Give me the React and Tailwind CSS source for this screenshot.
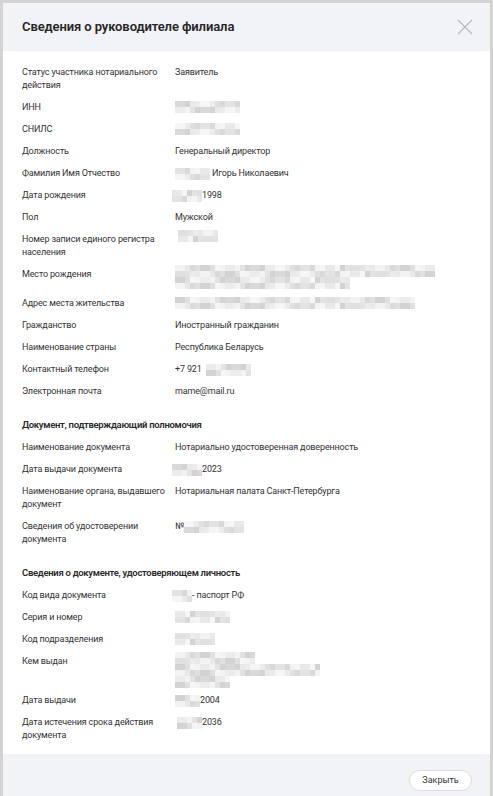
import React from "react";

const shades = [
  "bg-[#ececec]",
  "bg-[#e3e3e3]",
  "bg-[#f3f3f3]",
  "bg-[#d9d9d9]",
  "bg-[#e9e9e9]",
  "bg-[#d3d3d3]",
  "bg-[#f6f6f6]",
  "bg-[#e0e0e0]",
];

function Blur({ widths = [60], seed = 1, cell = 5 }) {
  return (
    <div className="flex flex-col">
      {widths.map((w, li) => {
        const n = Math.max(1, Math.round(w / cell));
        return (
          <div key={li} className="flex flex-col">
            {[0, 1].map((r) => (
              <div key={r} className="flex h-[6px]">
                {Array.from({ length: n }).map((_, i) => (
                  <div
                    key={i}
                    className={shades[(i * 7 + r * 5 + li * 11 + seed * 3 + ((i * i) % 5)) % shades.length]}
                    style={{ width: cell }}
                  />
                ))}
              </div>
            ))}
          </div>
        );
      })}
    </div>
  );
}

function Row({ label, children, valueClass = "" }) {
  return (
    <div className="flex items-start">
      <div className="w-[153px] shrink-0 pr-[6px]">{label}</div>
      <div className={"flex-1 " + valueClass}>{children}</div>
    </div>
  );
}

function Heading({ children }) {
  return (
    <div className="mt-[10px] text-[9.5px] leading-[15px] font-semibold tracking-[-0.3px] text-[#2a2a2a]">
      {children}
    </div>
  );
}

export default function App() {
  return (
    <div
      className="h-[796px] w-[493px] overflow-hidden bg-[#d3d3d3] pt-[3px] px-[3px]"
      style={{ fontFamily: 'Roboto, "Noto Sans", Arial, sans-serif' }}
    >
      <div className="flex h-full flex-col bg-white">
        <div className="flex h-[48px] shrink-0 items-center justify-between bg-[#f2f3f6] pl-[19px] pr-[17px]">
          <div className="text-[13px] font-semibold tracking-[-0.1px] text-[#262626]">
            Сведения о руководителе филиала
          </div>
          <svg width="16" height="16" viewBox="0 0 16 16" className="mb-[1px]">
            <path d="M1 1 L15 15 M15 1 L1 15" stroke="#b7b9be" strokeWidth="1.2" fill="none" />
          </svg>
        </div>

        <div className="flex flex-1 flex-col gap-[9px] px-[19px] pt-[15px] text-[9px] leading-[13px] tracking-[-0.15px] text-[#333]">
          <Row label="Статус участника нотариального действия">Заявитель</Row>
          <Row label="ИНН">
            <Blur widths={[65]} seed={1} />
          </Row>
          <Row label="СНИЛС">
            <Blur widths={[67]} seed={2} />
          </Row>
          <Row label="Должность">Генеральный директор</Row>
          <Row label="Фамилия Имя Отчество">
            <div className="flex items-center gap-[2px]">
              <Blur widths={[35]} seed={3} />
              <span>Игорь Николаевич</span>
            </div>
          </Row>
          <Row label="Дата рождения">
            <div className="-ml-[3px] flex items-center">
              <Blur widths={[30]} seed={4} />
              <span>1998</span>
            </div>
          </Row>
          <Row label="Пол">Мужской</Row>
          <Row label="Номер записи единого регистра населения">
            <div className="ml-[3px] -mt-[3px]">
              <Blur widths={[40]} seed={5} />
            </div>
          </Row>
          <Row label="Место рождения">
            <div className="h-[23px]">
              <div className="-mt-[3px]">
                <Blur widths={[260, 175]} seed={6} />
              </div>
            </div>
          </Row>
          <Row label="Адрес места жительства">
            <Blur widths={[242]} seed={7} />
          </Row>
          <Row label="Гражданство">Иностранный гражданин</Row>
          <Row label="Наименование страны">Республика Беларусь</Row>
          <Row label="Контактный телефон">
            <div className="flex items-center gap-[4px]">
              <span>+7 921</span>
              <Blur widths={[45]} seed={8} />
            </div>
          </Row>
          <Row label="Электронная почта">mame@mail.ru</Row>

          <Heading>Документ, подтверждающий полномочия</Heading>
          <Row label="Наименование документа">Нотариально удостоверенная доверенность</Row>
          <Row label="Дата выдачи документа">
            <div className="-ml-[3px] flex items-center">
              <Blur widths={[28]} seed={9} />
              <span>2023</span>
            </div>
          </Row>
          <Row label="Наименование органа, выдавшего документ">
            Нотариальная палата Санкт-Петербурга
          </Row>
          <Row label="Сведения об удостоверении документа">
            <div className="flex items-center">
              <span>№</span>
              <Blur widths={[58]} seed={10} />
            </div>
          </Row>

          <Heading>Сведения о документе, удостоверяющем личность</Heading>
          <Row label="Код вида документа">
            <div className="-ml-[3px] flex items-center">
              <Blur widths={[18]} seed={11} />
              <span>- паспорт РФ</span>
            </div>
          </Row>
          <Row label="Серия и номер">
            <Blur widths={[57]} seed={12} />
          </Row>
          <Row label="Код подразделения">
            <Blur widths={[38]} seed={13} />
          </Row>
          <Row label="Кем выдан">
            <div className="h-[33px]">
              <div className="-mt-[3px]">
                <Blur widths={[80, 147, 55]} seed={14} />
              </div>
            </div>
          </Row>
          <Row label="Дата выдачи">
            <div className="flex items-center">
              <Blur widths={[27]} seed={15} />
              <span>2004</span>
            </div>
          </Row>
          <Row label="Дата истечения срока действия документа">
            <div className="ml-[2px] flex items-center">
              <Blur widths={[25]} seed={16} />
              <span>2036</span>
            </div>
          </Row>
        </div>

        <div className="flex h-[42px] shrink-0 items-start justify-end bg-[#f2f3f6] pr-[18px] pt-[16px]">
          <button className="h-[21px] w-[63px] rounded-full border border-[#d9dce1] bg-white text-[9px] text-[#333]">
            Закрыть
          </button>
        </div>
      </div>
    </div>
  );
}
